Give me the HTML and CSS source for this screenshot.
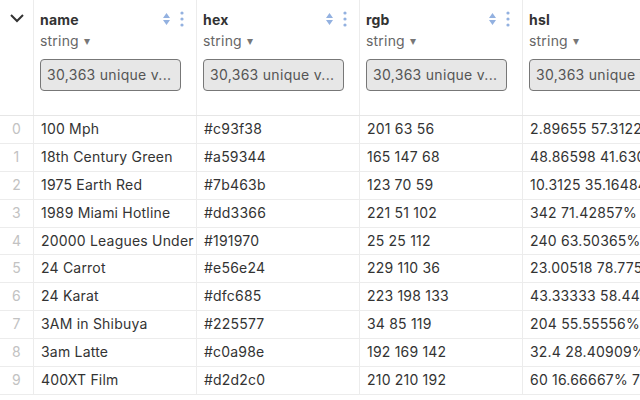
FILE: index.html
```html
<!DOCTYPE html>
<html>
<head>
<meta charset="utf-8">
<link rel="stylesheet" href="styles.css">
</head>
<body>
<div class="table">
  <div class="row head">
    <div class="cell idx"><svg class="chev" width="16" height="10" viewBox="0 0 16 10"><path d="M2 2 L8 8 L14 2" fill="none" stroke="#333" stroke-width="2"/></svg></div>
    <div class="cell hcell">
      <div class="htop"><span class="hname">name</span>
        <span class="icons"><svg width="9" height="14" viewBox="0 0 9 14"><path d="M4.5 1 L8 6 L1 6 Z M4.5 13 L8 8 L1 8 Z" fill="#93b1e0"/></svg><svg width="6" height="16" viewBox="0 0 6 16"><circle cx="3" cy="2" r="1.6" fill="#93b1e0"/><circle cx="3" cy="8" r="1.6" fill="#93b1e0"/><circle cx="3" cy="14" r="1.6" fill="#93b1e0"/></svg></span></div>
      <div class="htype">string <span class="caret">▾</span></div>
      <div class="filter">30,363 unique v...</div>
    </div>
    <div class="cell hcell">
      <div class="htop"><span class="hname">hex</span>
        <span class="icons"><svg width="9" height="14" viewBox="0 0 9 14"><path d="M4.5 1 L8 6 L1 6 Z M4.5 13 L8 8 L1 8 Z" fill="#93b1e0"/></svg><svg width="6" height="16" viewBox="0 0 6 16"><circle cx="3" cy="2" r="1.6" fill="#93b1e0"/><circle cx="3" cy="8" r="1.6" fill="#93b1e0"/><circle cx="3" cy="14" r="1.6" fill="#93b1e0"/></svg></span></div>
      <div class="htype">string <span class="caret">▾</span></div>
      <div class="filter">30,363 unique v...</div>
    </div>
    <div class="cell hcell">
      <div class="htop"><span class="hname">rgb</span>
        <span class="icons"><svg width="9" height="14" viewBox="0 0 9 14"><path d="M4.5 1 L8 6 L1 6 Z M4.5 13 L8 8 L1 8 Z" fill="#93b1e0"/></svg><svg width="6" height="16" viewBox="0 0 6 16"><circle cx="3" cy="2" r="1.6" fill="#93b1e0"/><circle cx="3" cy="8" r="1.6" fill="#93b1e0"/><circle cx="3" cy="14" r="1.6" fill="#93b1e0"/></svg></span></div>
      <div class="htype">string <span class="caret">▾</span></div>
      <div class="filter">30,363 unique v...</div>
    </div>
    <div class="cell hcell">
      <div class="htop"><span class="hname">hsl</span></div>
      <div class="htype">string <span class="caret">▾</span></div>
      <div class="filter">30,363 unique values</div>
    </div>
  </div>
  <div class="row"><div class="cell idx">0</div><div class="cell">100 Mph</div><div class="cell">#c93f38</div><div class="cell">201 63 56</div><div class="cell">2.89655 57.31225% 50.39216%</div></div>
  <div class="row"><div class="cell idx">1</div><div class="cell">18th Century Green</div><div class="cell">#a59344</div><div class="cell">165 147 68</div><div class="cell">48.86598 41.63090% 45.68627%</div></div>
  <div class="row"><div class="cell idx">2</div><div class="cell">1975 Earth Red</div><div class="cell">#7b463b</div><div class="cell">123 70 59</div><div class="cell">10.3125 35.16484% 35.68627%</div></div>
  <div class="row"><div class="cell idx">3</div><div class="cell">1989 Miami Hotline</div><div class="cell">#dd3366</div><div class="cell">221 51 102</div><div class="cell">342 71.42857% 53.33333%</div></div>
  <div class="row"><div class="cell idx">4</div><div class="cell">20000 Leagues Under the Sea</div><div class="cell">#191970</div><div class="cell">25 25 112</div><div class="cell">240 63.50365% 26.86275%</div></div>
  <div class="row"><div class="cell idx">5</div><div class="cell">24 Carrot</div><div class="cell">#e56e24</div><div class="cell">229 110 36</div><div class="cell">23.00518 78.77551% 51.96078%</div></div>
  <div class="row"><div class="cell idx">6</div><div class="cell">24 Karat</div><div class="cell">#dfc685</div><div class="cell">223 198 133</div><div class="cell">43.33333 58.44156% 69.80392%</div></div>
  <div class="row"><div class="cell idx">7</div><div class="cell">3AM in Shibuya</div><div class="cell">#225577</div><div class="cell">34 85 119</div><div class="cell">204 55.55556% 30%</div></div>
  <div class="row"><div class="cell idx">8</div><div class="cell">3am Latte</div><div class="cell">#c0a98e</div><div class="cell">192 169 142</div><div class="cell">32.4 28.40909% 65.49020%</div></div>
  <div class="row"><div class="cell idx">9</div><div class="cell">400XT Film</div><div class="cell">#d2d2c0</div><div class="cell">210 210 192</div><div class="cell">60 16.66667% 78.82353%</div></div>
</div>
</body>
</html>
```
FILE: styles.css
```css
html, body {
  margin: 0;
  padding: 0;
  background: #fff;
  width: 640px;
  height: 400px;
  overflow: hidden;
}
.table {
  font-family: Inter, "Noto Sans", sans-serif;
  font-size: 14px;
  color: #333;
  width: 640px;
  height: 400px;
  overflow: hidden;
}
.row {
  display: grid;
  grid-template-columns: 34px 163px 163px 163px 163px;
  height: 27.9px;
  box-sizing: border-box;
  border-bottom: 1px solid #ececec;
}
.row.head {
  height: 116px;
  border-bottom: 1px solid #e6e6e6;
}
.cell {
  box-sizing: border-box;
  border-right: 1px solid #ececec;
  padding: 0 7px 2px 7px;
  white-space: nowrap;
  overflow: hidden;
  display: flex;
  align-items: center;
  letter-spacing: 0.2px;
}
.cell.idx {
  justify-content: center;
  color: #c2c2c2;
  padding: 0 0 2px 0;
}
.head .cell.idx {
  align-items: flex-start;
  padding-top: 13px;
}
.chev {
  display: block;
}
.hcell {
  flex-direction: column;
  align-items: stretch;
  padding: 10px 11px 0 6px;
  letter-spacing: 0.2px;
}
.htop {
  display: flex;
  justify-content: space-between;
  align-items: center;
  height: 19px;
}
.hname {
  font-weight: 700;
  color: #333;
}
.icons {
  display: flex;
  align-items: center;
  gap: 8px;
  margin-top: -2px;
}
.icons svg {
  display: block;
}
.htype {
  color: #666;
  height: 19px;
  margin-top: 2px;
  display: flex;
  align-items: center;
}
.caret {
  font-size: 12px;
  color: #777;
  margin-left: 5px;
}
.filter {
  margin-top: 9px;
  width: 141px;
  height: 32px;
  box-sizing: border-box;
  border: 1px solid #777;
  border-radius: 4px;
  background: #e7e7e7;
  color: #555;
  padding: 0 0 1px 6px;
  display: flex;
  align-items: center;
  overflow: hidden;
  white-space: nowrap;
  letter-spacing: 0.3px;
}
```
